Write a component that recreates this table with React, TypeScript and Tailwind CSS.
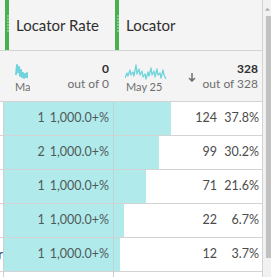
import React from "react";

const FONT = { fontFamily: "Lato, 'Open Sans', sans-serif" };

function Grip() {
  return (
    <svg width="4" height="50" viewBox="0 0 4 50" className="shrink-0">
      <rect x="0" y="0" width="4" height="50" fill="#47b04f" />
      {[16, 19, 22, 25, 28, 31].map((y) => (
        <circle key={y} cx="3" cy={y} r="0.8" fill="#c9efcb" />
      ))}
    </svg>
  );
}

function Spark({ w, h, pts, sw }: { w: number; h: number; pts: string; sw: number }) {
  return (
    <svg width={w} height={h} viewBox={`0 0 ${w} ${h}`} className="block shrink-0">
      <polyline points={pts} fill="none" stroke="#6fd4db" strokeWidth={sw} strokeLinejoin="round" />
    </svg>
  );
}

const rows = [
  { a: 1, b: 124, p: "37.8%", pct: 37.8 },
  { a: 2, b: 99, p: "30.2%", pct: 30.2 },
  { a: 1, b: 71, p: "21.6%", pct: 21.6 },
  { a: 1, b: 22, p: "6.7%", pct: 6.7 },
  { a: 1, b: 12, p: "3.7%", pct: 3.7 },
];

export default function App() {
  return (
    <div className="w-[271px] h-[277px] overflow-hidden flex bg-white" style={FONT}>
      <div className="w-[263px] h-full flex flex-col border-r border-[#d3d3d3]">
        {/* header */}
        <div className="h-[51px] shrink-0 flex bg-[#f4f4f4] border-b border-[#d3d3d3]">
          <div className="w-[114px] flex items-center pl-[5px]">
            <Grip />
            <span className="ml-[7px] text-[15px] text-[#2f2f2f]">Locator Rate</span>
          </div>
          <div className="flex-1 flex items-center pl-[1px]">
            <Grip />
            <span className="ml-[7px] text-[15px] text-[#2f2f2f]">Locator</span>
          </div>
        </div>
        {/* summary */}
        <div className="h-[51px] shrink-0 flex bg-[#f4f4f4] border-b border-[#d3d3d3]">
          <div className="w-[114px] flex items-center pl-[15px] pr-[5px]">
            <div className="w-[15px] overflow-hidden flex flex-col pt-[2px]">
              <Spark
                w={13}
                h={18}
                sw={2}
                pts="1,13 2,3 3,10 4,5 5,14 6,8 7,15 8,11 9,16 10,12 11,15 12,11 12.5,16"
              />
              <span className="text-[11px] leading-[13px] text-[#6e6e6e] whitespace-nowrap">May 25</span>
            </div>
            <div className="flex-1 flex flex-col items-end">
              <span className="text-[12px] font-bold leading-[16px] text-[#2f2f2f]">0</span>
              <span className="text-[12px] leading-[14px] text-[#6e6e6e]">out of 0</span>
            </div>
          </div>
          <div className="flex-1 flex items-center pl-[11px] pr-[4px]">
            <div className="flex flex-col pt-[4px]">
              <Spark
                w={42}
                h={17}
                sw={1.3}
                pts="0,15 2,10 3,13 5,7 6,12 8,9 9,13 11,2 12,11 14,6 15,12 17,8 18,14 20,11 21,16 23,9 24,13 26,5 27,12 29,8 30,14 32,6 33,12 35,10 36,15 38,7 39,12 41,16"
              />
              <span className="text-[11px] leading-[13px] text-[#6e6e6e] whitespace-nowrap pl-[1px]">May 25</span>
            </div>
            <svg width="8" height="9" viewBox="0 0 8 9" className="ml-[21px] mt-[3px]">
              <path d="M4 0 V8 M1 5 L4 8 L7 5" fill="none" stroke="#6e6e6e" strokeWidth="1.5" />
            </svg>
            <div className="flex-1 flex flex-col items-end">
              <span className="text-[12px] font-bold leading-[16px] text-[#2f2f2f]">328</span>
              <span className="text-[12px] leading-[14px] text-[#6e6e6e]">out of 328</span>
            </div>
          </div>
        </div>
        {/* data rows */}
        {rows.map((r, i) => (
          <div key={i} className="h-[34px] shrink-0 flex border-b border-[#d3d3d3]">
            <div className="w-[4px] border-r border-[#cfcfcf] overflow-hidden flex items-center justify-end">
              {i === 4 && <span className="text-[13px] text-[#2a4a7f] whitespace-nowrap">Store Locator</span>}
            </div>
            <div className="w-[110px] bg-[#b1eaea] border-r border-[#bcd6d6] flex items-center justify-end pr-[4px] gap-[5px] text-[12.5px] text-[#4e5a5a]">
              <span>{r.a}</span>
              <span>1,000.0+%</span>
            </div>
            <div className="flex-1 relative flex items-center justify-end pr-[3px] gap-[5px] text-[12.5px] text-[#4b4b4b]">
              <div className="absolute left-0 top-0 bottom-0 bg-[#b1eaea]" style={{ width: `${r.pct * 1.5}px` }} />
              <span className="relative">{r.b}</span>
              <span className="relative w-[37px] text-right">{r.p}</span>
            </div>
          </div>
        ))}
        <div className="flex-1 flex">
          <div className="w-[4px] border-r border-[#cfcfcf]" />
          <div className="w-[110px] border-r border-[#cfcfcf]" />
        </div>
      </div>
      {/* scrollbar */}
      <div className="w-[8px] h-full bg-[#f1f1f1] flex flex-col">
        <svg width="8" height="16" viewBox="0 0 8 16" className="block">
          <path d="M4.5 8 L7 10.5 L2 10.5 Z" fill="#a3a3a3" />
        </svg>
        <div className="ml-[3px] w-[5px] h-[242px] bg-[#c1c1c1]" />
      </div>
    </div>
  );
}
